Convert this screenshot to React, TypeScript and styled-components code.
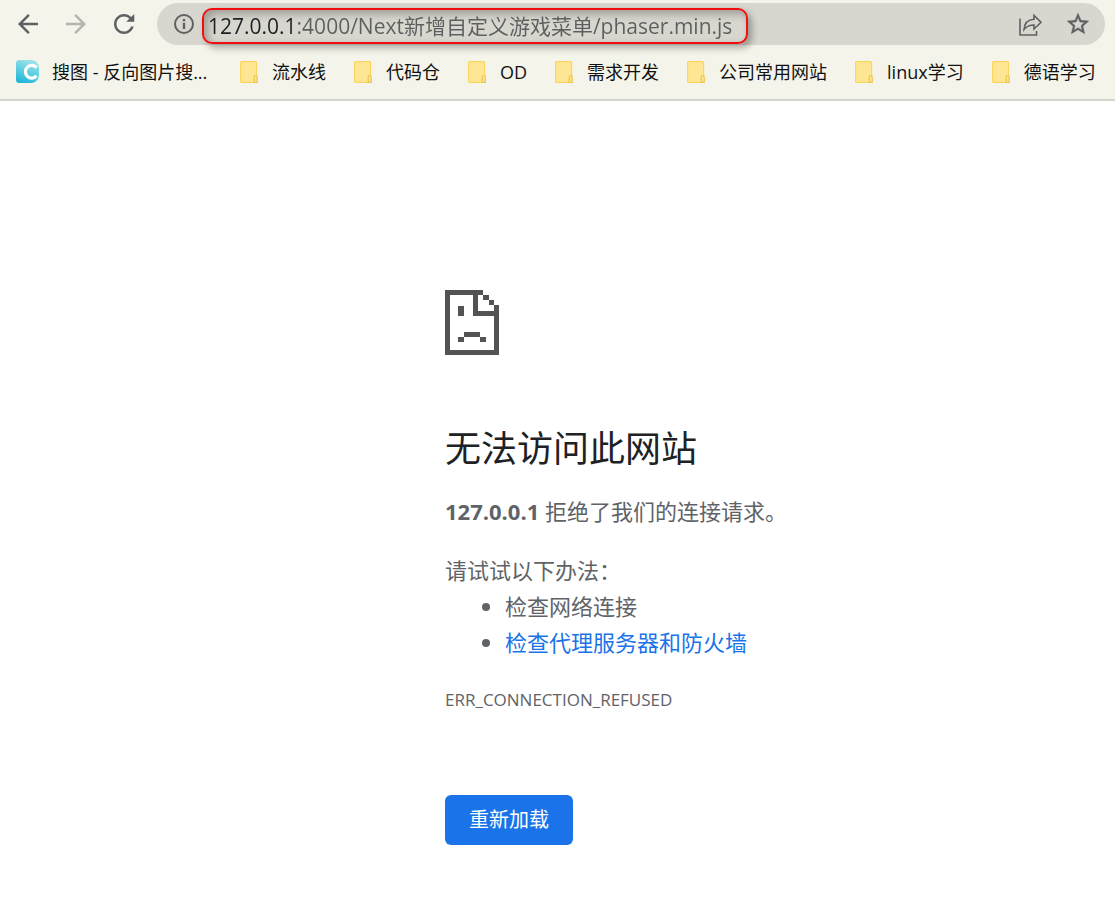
import React from "react";
import styled, { createGlobalStyle } from "styled-components";

const GlobalStyle = createGlobalStyle`
  *, *::before, *::after { box-sizing: border-box; }
  body {
    margin: 0;
    background: #fff;
    font-family: "Open Sans", "Noto Sans CJK SC", sans-serif;
  }
`;

const Chrome = styled.header`
  background: #f5f4ea;
  border-bottom: 2px solid #d5d4cb;
`;

const Toolbar = styled.div`
  display: flex;
  align-items: center;
  gap: 18px;
  padding: 3px 10px 3px 13px;
`;

const NavButton = styled.button`
  display: block;
  flex: none;
  width: 30px;
  height: 30px;
  padding: 0;
  border: 0;
  background: none;
  color: #5f6064;
  &:disabled { color: #b4b4b0; }
  svg { display: block; width: 30px; height: 30px; fill: currentColor; }
`;

const AddressBar = styled.div`
  display: flex;
  flex: 1;
  align-items: center;
  min-width: 0;
  height: 42px;
  padding: 0 14px;
  border-radius: 21px;
  background: #d8d7cf;
`;

const PillButton = styled.button`
  flex: none;
  width: 26px;
  height: 26px;
  padding: 0;
  border: 0;
  background: none;
  color: #606063;
  svg { display: block; width: 100%; height: 100%; fill: currentColor; }
`;

const Highlight = styled.label`
  display: flex;
  align-items: center;
  width: 546px;
  min-width: 0;
  height: 36px;
  margin: 4px auto 0 5px;
  padding: 0 4px;
  border: 2px solid #f30d0d;
  border-radius: 10px;
  box-shadow: 4px 4px 7px rgba(0, 0, 0, 0.3), inset 4px 4px 8px rgba(0, 0, 0, 0.28);
`;

const UrlInput = styled.input`
  width: 100%;
  height: 30px;
  padding: 0;
  border: 0;
  outline: 0;
  font: 21px/30px "Open Sans", "Noto Sans CJK SC", sans-serif;
  color: transparent;
  background: linear-gradient(to right, #1f2023 89px, #5d5e5f 89px);
  background-clip: text;
`;

const Actions = styled.div`
  display: flex;
  align-items: center;
  gap: 22px;
`;

const Bookmarks = styled.nav`
  display: flex;
  align-items: center;
  gap: 28px;
  height: 51px;
  padding: 0 16px 3px;
  overflow: hidden;
`;

const Bookmark = styled.a<{ $site?: boolean }>`
  display: flex;
  flex: none;
  align-items: center;
  gap: ${(p) => (p.$site ? 12 : 14)}px;
  min-width: ${(p) => (p.$site ? "196px" : "auto")};
  color: #111;
  font-size: 18px;
  line-height: 26px;
  text-decoration: none;
  white-space: nowrap;
  svg { display: block; }
`;

const ErrorPage = styled.main`
  padding: 189px 24px 74px calc(40% - 1px);
  color: #5f6368;
  font-size: 22px;
  line-height: 36px;
`;

const SadPage = styled.svg`
  display: block;
  width: 54px;
  height: 65px;
`;

const Title = styled.h1`
  margin: 70px 0 20px;
  color: #202124;
  font-size: 36px;
  font-weight: 400;
  line-height: 48px;
`;

const Text = styled.p`
  margin: 0 0 23px;
`;

const Suggestions = styled.ul`
  margin: -23px 0 22px;
  padding-left: 60px;
`;

const HelpLink = styled.a`
  color: #1a73e8;
  text-decoration: none;
`;

const ErrorCode = styled.div`
  font-size: 17px;
  line-height: 36px;
`;

const Reload = styled.button`
  display: block;
  height: 50px;
  margin-top: 77px;
  padding: 0 24px;
  border: 0;
  border-radius: 6px;
  background: #1a73e8;
  color: #fff;
  font: 20px/50px "Open Sans", "Noto Sans CJK SC", sans-serif;
`;

const FolderIcon = () => (
  <svg width="18" height="22" viewBox="0 0 18 22" aria-hidden="true">
    <rect x="0.6" y="0.6" width="16" height="20.800" rx="1" fill="#ffe694" stroke="#fbd65f" strokeWidth="1.200" />
    <path d="M14.200 21.300v-5.300a1.500 1.500 0 0 1 3 0v5.300z" fill="#ffe694" stroke="#e9c64f" strokeWidth="1.200" />
  </svg>
);

const SiteIcon = () => (
  <svg width="24" height="24" viewBox="0 0 24 24" aria-hidden="true">
    <defs>
      <linearGradient id="site" x1="0.4" y1="0" x2="0" y2="1">
        <stop offset="0" stopColor="#95e1ea" />
        <stop offset="1" stopColor="#12b2d4" />
      </linearGradient>
    </defs>
    <path d="M3.500 0H15a8 8 0 0 1 8 8v7a8 8 0 0 1-8 8H3.500A3.500 3.500 0 0 1 0 19.500v-16A3.500 3.500 0 0 1 3.500 0z" fill="url(#site)" />
    <path d="M20.500 7.600a6.300 6.300 0 1 0 0 8.300" fill="none" stroke="#fff" strokeWidth="3.200" />
  </svg>
);

const folders = ["流水线", "代码仓", "OD", "需求开发", "公司常用网站", "linux学习", "德语学习"];

export default function App() {
  return (
    <>
      <GlobalStyle />
      <Chrome>
        <Toolbar>
          <NavButton aria-label="后退">
            <svg viewBox="0 0 24 24"><path d="M20 11H7.830l5.590-5.590L12 4l-8 8 8 8 1.410-1.410L7.830 13H20z" /></svg>
          </NavButton>
          <NavButton aria-label="前进" disabled>
            <svg viewBox="0 0 24 24"><path d="M4 11h12.170l-5.590-5.590L12 4l8 8-8 8-1.410-1.410L16.170 13H4z" /></svg>
          </NavButton>
          <NavButton aria-label="刷新">
            <svg viewBox="0 0 24 24"><path d="M17.650 6.350C16.200 4.900 14.210 4 12 4c-4.420 0-7.990 3.580-7.990 8s3.570 8 7.990 8c3.730 0 6.840-2.550 7.730-6h-2.080c-.82 2.330-3.040 4-5.650 4-3.310 0-6-2.690-6-6s2.690-6 6-6c1.660 0 3.140.69 4.220 1.780L13.800 10.200h6.400V4z" /></svg>
          </NavButton>
          <AddressBar>
            <PillButton aria-label="网站信息">
              <svg viewBox="0 0 26 26">
                <circle cx="13" cy="13" r="9" fill="none" stroke="currentColor" strokeWidth="2" />
                <path d="M11.800 8h2.400v2.200h-2.400zM11.800 11.800h2.400v6.200h-2.400z" />
              </svg>
            </PillButton>
            <Highlight>
              <UrlInput type="text" aria-label="地址" defaultValue="127.0.0.1:4000/Next新增自定义游戏菜单/phaser.min.js" />
            </Highlight>
            <Actions>
              <PillButton aria-label="分享">
                <svg viewBox="0 0 26 26">
                  <path d="M3 7.500v16.500h16.500v-4" fill="none" stroke="currentColor" strokeWidth="1.600" />
                  <path d="M7 18.500c.5-6 4-10 10-10.300V4.500l7 6.800-7 6.700v-4c-4.500 0-7.500 1.300-10 4.500z" fill="none" stroke="currentColor" strokeWidth="1.600" />
                </svg>
              </PillButton>
              <PillButton aria-label="收藏">
                <svg viewBox="0 0 24 24"><path stroke="currentColor" strokeWidth="0.4" d="M22 9.240l-7.190-.62L12 2 9.190 8.630 2 9.240l5.460 4.730L5.820 21 12 17.270 18.180 21l-1.630-7.030L22 9.240zM12 15.400l-3.760 2.270 1-4.280-3.320-2.880 4.380-.38L12 6.100l1.710 4.040 4.380.38-3.320 2.880 1 4.280L12 15.400z" /></svg>
              </PillButton>
            </Actions>
          </AddressBar>
        </Toolbar>
        <Bookmarks aria-label="书签">
          <Bookmark href="#" $site><SiteIcon />搜图 - 反向图片搜...</Bookmark>
          {folders.map((name) => (
            <Bookmark key={name} href="#"><FolderIcon />{name}</Bookmark>
          ))}
        </Bookmarks>
      </Chrome>
      <ErrorPage>
        <SadPage viewBox="0 0 54 65" fill="#535353" shapeRendering="crispEdges" aria-hidden="true">
          <path d="M0 0h38v5h-5v16h21v44H0zM5 5v55h44V26H28V5z" fillRule="evenodd" />
          <path d="M38 5h5.500v5H38zM43.500 10H49v5h-5.500zM49 15h5v6h-5zM13 16h6v10h-6zM19 42h16v5H19zM13 47h6v5h-6zM35 47h6v5h-6z" />
        </SadPage>
        <Title>无法访问此网站</Title>
        <Text><strong>127.0.0.1</strong> 拒绝了我们的连接请求。</Text>
        <Text>请试试以下办法：</Text>
        <Suggestions>
          <li>检查网络连接</li>
          <li><HelpLink href="#">检查代理服务器和防火墙</HelpLink></li>
        </Suggestions>
        <ErrorCode>ERR_CONNECTION_REFUSED</ErrorCode>
        <Reload type="button">重新加载</Reload>
      </ErrorPage>
    </>
  );
}
